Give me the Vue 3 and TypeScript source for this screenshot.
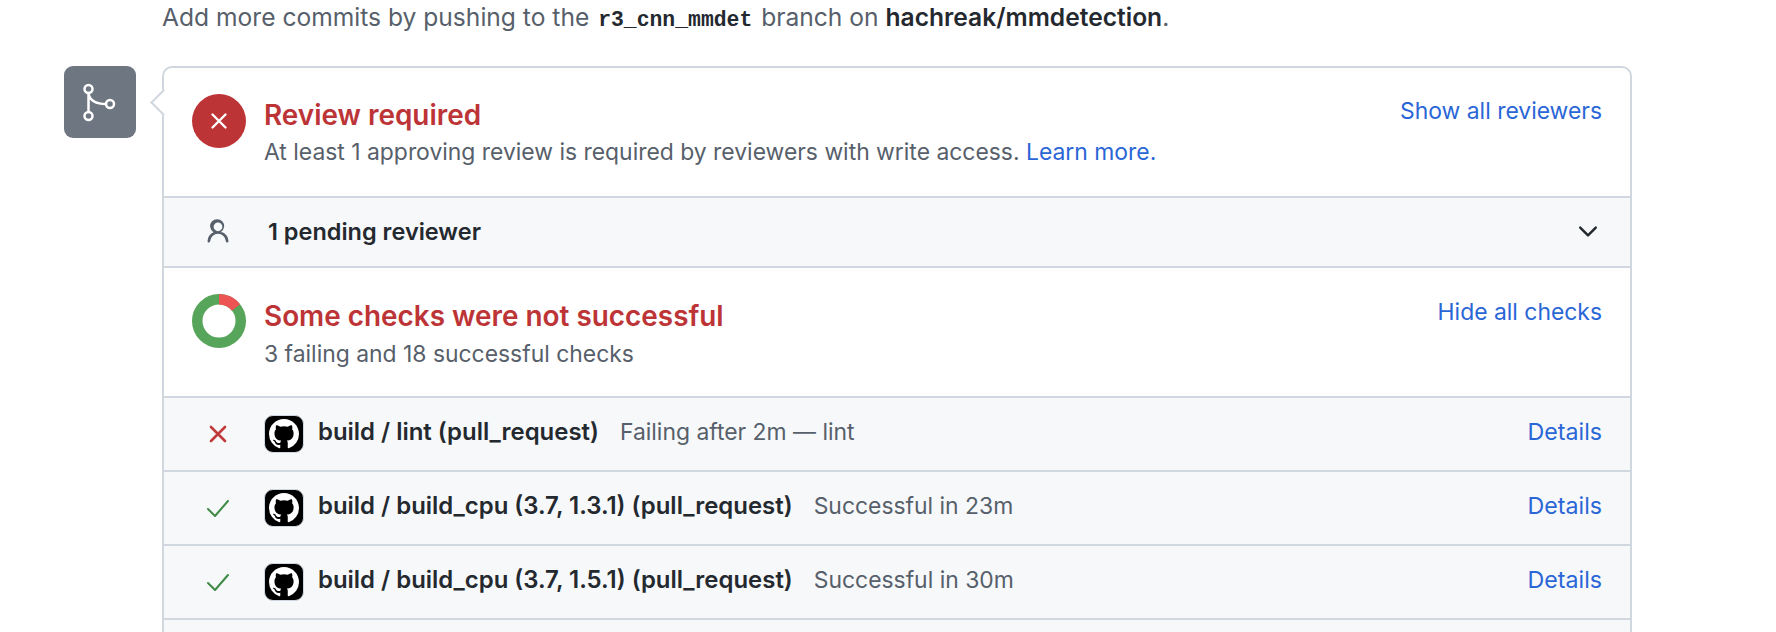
<template>
  <div class="page">
    <p class="hint">
      Add more commits by pushing to the <code>r3_cnn_mmdet</code> branch on <strong>hachreak/mmdetection</strong>.
    </p>
    <div class="timeline">
      <div class="badge">
        <svg class="merge-icon" viewBox="0 0 40 40" fill="none" stroke="#fff" stroke-width="2.5" stroke-linecap="round">
          <circle cx="8.5" cy="7" r="4" />
          <circle cx="8.5" cy="34" r="4" />
          <circle cx="30" cy="22" r="4" />
          <path d="M8.5 11v19M8.5 12c1.5 6 7 10 17.5 10" />
        </svg>
      </div>
      <div class="box">
        <span class="caret"></span>
        <section class="summary">
          <div class="status-circle">
            <svg viewBox="0 0 24 24" width="24" height="24" fill="none" stroke="#fff" stroke-width="2.4" stroke-linecap="round">
              <path d="M5.5 5.5l13 13M18.5 5.5l-13 13" />
            </svg>
          </div>
          <div class="summary-text">
            <h3>Review required</h3>
            <p>At least 1 approving review is required by reviewers with write access. <a>Learn more.</a></p>
          </div>
          <a class="side-link">Show all reviewers</a>
        </section>
        <section class="reviewers">
          <svg class="person" viewBox="0 0 16 16" fill="#57606a">
            <path d="M10.561 8.073a6.005 6.005 0 0 1 3.432 5.142.75.75 0 1 1-1.498.07 4.5 4.5 0 0 0-8.99 0 .75.75 0 0 1-1.498-.07 6.004 6.004 0 0 1 3.431-5.142 3.999 3.999 0 1 1 4.123 0ZM10.5 5a2.5 2.5 0 1 0-5 0 2.5 2.5 0 0 0 5 0Z" />
          </svg>
          <strong>1 pending reviewer</strong>
          <svg class="chevron" viewBox="0 0 18 12" fill="none" stroke="#24292f" stroke-width="2.2" stroke-linecap="round" stroke-linejoin="round">
            <path d="M2 2l7 7 7-7" />
          </svg>
        </section>
        <section class="summary checks">
          <svg class="donut" viewBox="0 0 54 54">
            <circle cx="27" cy="27" r="21.75" fill="none" stroke="#57a55a" stroke-width="10.5" />
            <path d="M27 5.25A21.75 21.75 0 0 1 44 13.44" fill="none" stroke="#ec5353" stroke-width="10.5" />
          </svg>
          <div class="summary-text">
            <h3>Some checks were not successful</h3>
            <p>3 failing and 18 successful checks</p>
          </div>
          <a class="side-link">Hide all checks</a>
        </section>
        <div v-for="check in checks" :key="check.name" class="check-row">
          <svg class="check-state" viewBox="0 0 24 20" fill="none" :stroke="check.failed ? '#c0393b' : '#3f8a46'" :stroke-width="check.failed ? 2.6 : 2" stroke-linecap="round" stroke-linejoin="round">
            <path v-if="check.failed" d="M5 3l14 14M19 3L5 17" />
            <path v-else d="M2 11l7 7L22 3" />
          </svg>
          <div class="app-logo">
            <svg viewBox="0 0 16 16" fill="#fff">
              <path d="M8 0c4.42 0 8 3.58 8 8a8.013 8.013 0 0 1-5.45 7.59c-.4.08-.55-.17-.55-.38 0-.27.01-1.13.01-2.2 0-.75-.25-1.23-.54-1.48 1.78-.2 3.65-.88 3.65-3.95 0-.88-.31-1.59-.82-2.15.08-.2.36-1.02-.08-2.12 0 0-.67-.22-2.2.82-.64-.18-1.32-.27-2-.27-.68 0-1.36.09-2 .27-1.53-1.03-2.2-.82-2.2-.82-.44 1.1-.16 1.92-.08 2.12-.51.56-.82 1.27-.82 2.15 0 3.06 1.86 3.75 3.64 3.95-.23.2-.44.55-.51 1.07-.46.21-1.61.55-2.33-.66-.15-.24-.6-.83-1.23-.82-.67.01-.27.38.01.53.34.19.73.9.82 1.13.16.45.68 1.31 2.69.94 0 .67.01 1.3.01 1.49 0 .21-.15.45-.55.38A7.995 7.995 0 0 1 0 8c0-4.42 3.58-8 8-8Z" />
            </svg>
          </div>
          <strong class="check-name">{{ check.name }}</strong>
          <span class="check-note">{{ check.note }}</span>
          <a class="details">Details</a>
        </div>
        <div class="check-row"></div>
      </div>
    </div>
  </div>
</template>

<script setup lang="ts">
interface Check {
  name: string
  note: string
  failed: boolean
}

const checks: Check[] = [
  { name: 'build / lint (pull_request)', note: 'Failing after 2m — lint', failed: true },
  { name: 'build / build_cpu (3.7, 1.3.1) (pull_request)', note: 'Successful in 23m', failed: false },
  { name: 'build / build_cpu (3.7, 1.5.1) (pull_request)', note: 'Successful in 30m', failed: false },
]
</script>

<style scoped>
.page {
  height: 632px;
  overflow: hidden;
  padding-left: 64px;
  background: #fff;
  font-family: Inter, "Liberation Sans", sans-serif;
  font-size: 22.9px;
  color: #24292f;
}
.hint {
  margin: 0 0 0 98px;
  height: 66px;
  padding-top: 1px;
  line-height: 32px;
  font-size: 24.6px;
  color: #57606a;
  box-sizing: border-box;
}
.hint code {
  font-family: "Liberation Mono", monospace;
  font-weight: 700;
  font-size: 21.4px;
  color: #24292f;
  padding: 0 2px;
}
.hint strong {
  color: #24292f;
  font-weight: 600;
}
.timeline {
  display: flex;
  gap: 26px;
  align-items: flex-start;
}
.badge {
  width: 72px;
  height: 72px;
  flex: none;
  display: flex;
  align-items: center;
  justify-content: center;
  background: #6e7781;
  border-radius: 9px;
}
.merge-icon {
  width: 40px;
  height: 40px;
}
.box {
  position: relative;
  width: 1470px;
  flex: none;
  box-sizing: border-box;
  border: 2px solid #d0d7de;
  border-radius: 10px;
  background: #fff;
}
.caret {
  position: absolute;
  left: -10px;
  top: 25px;
  width: 17px;
  height: 17px;
  background: #fff;
  border-left: 2px solid #d0d7de;
  border-bottom: 2px solid #d0d7de;
  transform: rotate(45deg);
}
.summary {
  display: flex;
  align-items: flex-start;
  height: 130px;
  padding: 26px 28px 0 28px;
  box-sizing: border-box;
  border-bottom: 2px solid #d0d7de;
}
.status-circle {
  width: 54px;
  height: 54px;
  flex: none;
  display: flex;
  align-items: center;
  justify-content: center;
  border-radius: 50%;
  background: #bd3437;
}
.donut {
  width: 54px;
  height: 54px;
  flex: none;
}
.summary-text {
  flex: 1;
  margin-left: 18px;
  padding-top: 3px;
}
.summary-text h3 {
  margin: 0;
  font-size: 27.9px;
  line-height: 36px;
  font-weight: 600;
  color: #bd3437;
}
.summary-text p {
  margin: 3px 0 0;
  line-height: 32px;
  color: #57606a;
}
.checks .summary-text {
  padding-top: 4px;
}
.checks .summary-text p {
  margin-top: 4px;
}
.checks .side-link {
  margin-top: 1px;
}
a {
  color: #2a66d6;
}
.side-link {
  line-height: 34px;
}
.reviewers {
  display: flex;
  align-items: center;
  height: 70px;
  padding: 0 32px 0 40px;
  box-sizing: border-box;
  background: #f6f8fa;
  border-bottom: 2px solid #d0d7de;
}
.person {
  width: 28px;
  height: 28px;
  margin-right: 36px;
}
.reviewers strong {
  flex: 1;
  font-size: 23.5px;
  font-weight: 600;
  margin-top: -2px;
}
.chevron {
  width: 20px;
  height: 14px;
}
.check-row {
  display: flex;
  align-items: center;
  height: 74px;
  padding: 0 28px 0 42px;
  box-sizing: border-box;
  background: #f6f8fa;
  border-bottom: 2px solid #d0d7de;
}
.check-state {
  width: 24px;
  height: 20px;
  flex: none;
  margin-right: 34px;
}
.app-logo {
  width: 40px;
  height: 38px;
  flex: none;
  display: flex;
  align-items: center;
  justify-content: center;
  box-sizing: border-box;
  background: #000;
  border: 1px solid #d0d7de;
  border-radius: 9px;
  margin-right: 14px;
}
.app-logo svg {
  width: 30px;
  height: 30px;
}
.check-name {
  font-size: 23.95px;
  font-weight: 600;
  margin-right: 21px;
  margin-top: -6px;
}
.check-note {
  flex: 1;
  color: #57606a;
  margin-top: -4px;
}
.details {
  margin-top: -4px;
  font-size: 23.2px;
}
</style>
<style>
html, body { background: #fff; overflow: hidden; }
</style>
